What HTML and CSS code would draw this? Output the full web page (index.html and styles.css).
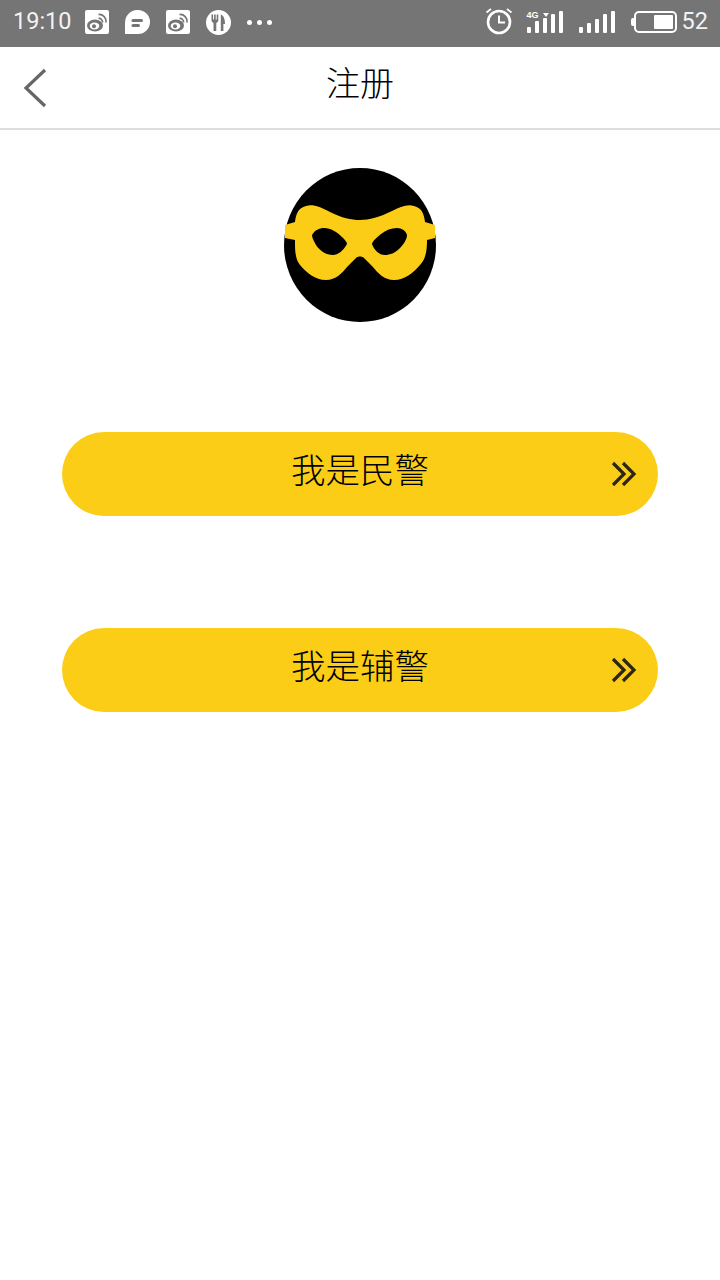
FILE: index.html
```html
<!DOCTYPE html>
<html lang="zh-CN">
<head>
<meta charset="utf-8">
<title>注册</title>
<link rel="stylesheet" href="styles.css">
</head>
<body>
<div class="status">
  <div class="status-left">
    <span class="time">19:10</span>
    <svg class="i-weibo" width="24" height="24" viewBox="0 0 24 24"><rect width="24" height="24" rx="2" fill="#fff"/><ellipse cx="10" cy="15.500" rx="8" ry="6" fill="#757575"/><ellipse cx="9.500" cy="16" rx="4.800" ry="3.400" fill="#fff"/><circle cx="9" cy="16.200" r="2" fill="#757575"/><path d="M13.500 4.500a7 7 0 0 1 7.500 8M13.500 8.500a3.500 3.500 0 0 1 4 4" fill="none" stroke="#757575" stroke-width="1.700"/></svg>
    <svg class="i-chat" width="25" height="24" viewBox="0 0 25 24"><path d="M13 0a12 12 0 1 1 0 24H0V13A12.500 13 0 0 1 13 0z" fill="#fff"/><rect x="6.500" y="9" width="11.500" height="3" rx="1.500" fill="#757575"/><rect x="6.500" y="14" width="8.500" height="3" rx="1.500" fill="#757575"/></svg>
    <svg class="i-weibo" width="24" height="24" viewBox="0 0 24 24"><rect width="24" height="24" rx="2" fill="#fff"/><ellipse cx="10" cy="15.500" rx="8" ry="6" fill="#757575"/><ellipse cx="9.500" cy="16" rx="4.800" ry="3.400" fill="#fff"/><circle cx="9" cy="16.200" r="2" fill="#757575"/><path d="M13.500 4.500a7 7 0 0 1 7.500 8M13.500 8.500a3.500 3.500 0 0 1 4 4" fill="none" stroke="#757575" stroke-width="1.700"/></svg>
    <svg class="i-food" width="25" height="25" viewBox="0 0 25 25"><circle cx="12.500" cy="12.500" r="12.500" fill="#fff"/><path d="M5.500 4.500v6a3 3 0 0 0 2 2.600V21h2.800v-7.900a3 3 0 0 0 2-2.600v-6h-1.600v5H9.700v-5H8.100v5H7.100v-5z" fill="#757575"/><path d="M14.800 21V4.500c2.800 1 4.200 4.200 4.200 9.500h-1.600v7z" fill="#757575"/></svg>
    <span class="dots"><i></i><i></i><i></i></span>
  </div>
  <div class="status-right">
    <svg class="i-alarm" width="28" height="28" viewBox="0 0 28 28"><circle cx="14" cy="15" r="11" fill="none" stroke="#fff" stroke-width="2.600"/><path d="M14 8.500V15.500H20" fill="none" stroke="#fff" stroke-width="2"/><path d="M1.500 5.500 6 2M26.500 5.500 22 2" stroke="#fff" stroke-width="1.800"/></svg>
    <div class="sig sig-4g">
      <span class="tag">4G</span><svg class="tri" width="6" height="4" viewBox="0 0 6 4"><path d="M0 0h6L3 4z" fill="#fff"/></svg>
      <span class="bars"><i class="b1"></i><i class="b2"></i><i class="b3"></i><i class="b4"></i><i class="b5"></i></span>
    </div>
    <div class="sig">
      <span class="bars"><i class="b1"></i><i class="b2"></i><i class="b3"></i><i class="b4"></i><i class="b5"></i></span>
    </div>
    <div class="battery"><span class="nub"></span><span class="shell"><span class="level"></span></span></div>
    <span class="pct">52</span>
  </div>
</div>

<header class="nav">
  <svg class="back" width="24" height="40" viewBox="0 0 24 40"><path d="M22 2 3 20l19 18" fill="none" stroke="#666" stroke-width="3.200"/></svg>
  <h1 class="title">注册</h1>
  <span class="nav-end"></span>
</header>

<main class="content">
  <svg class="avatar" width="152" height="154" viewBox="0 0 152 154">
    <ellipse cx="76" cy="77" rx="76" ry="77" fill="#000"/>
    <path fill="#fbcd16" fill-rule="evenodd" d="M1 57 11 54C12 46 14 40 22 38 29 36 36 39 46 44 58 50 67 52 76 52 85 52 96 49 108 43 116 39 123 36 130 38 138 40 140 46 141 54L151 57V70L143 72C143 82 142 91 136 97 129 105 121 112 110 112 100 112 94 105 88 98L80 90C78 88 74 88 72 90L64 98C58 105 52 112 42 112 31 112 23 105 16 97 11 91 11 82 11 72L1 70Z
    M28 67C31 62 35 60 40 60 47 60 53 64 58 69 61 72 63 74 63 76 59 83 54 87 49 87 42 87 36 83 32 77 30 73 28 70 28 67Z
    M88 76C88 74 92 70 97 66 102 62 107 60 113 60 118 60 122 63 123 67 123 71 120 76 116 80 111 85 106 87 101 87 95 87 90 82 88 76Z"/>
  </svg>
  <a class="role-btn first"><span class="role-label">我是民警</span><svg class="chev" width="26" height="26" viewBox="0 0 26 26"><path d="M2 2 13 13 2 24M12 2 23 13 12 24" fill="none" stroke="#2c2614" stroke-width="3.200"/></svg></a>
  <a class="role-btn"><span class="role-label">我是辅警</span><svg class="chev" width="26" height="26" viewBox="0 0 26 26"><path d="M2 2 13 13 2 24M12 2 23 13 12 24" fill="none" stroke="#2c2614" stroke-width="3.200"/></svg></a>
</main>
</body>
</html>
```
FILE: styles.css
```css
* { box-sizing: border-box; }
html, body { margin: 0; padding: 0; }
body {
  width: 720px;
  height: 1280px;
  background: #fff;
  overflow: hidden;
  font-family: "Noto Sans CJK SC", "Noto Sans", sans-serif;
  color: #111;
}
.status {
  height: 47px;
  background: #757575;
  display: flex;
  align-items: center;
  justify-content: space-between;
  padding: 0 12px 3px 13px;
  color: #fff;
}
.status-left, .status-right { display: flex; align-items: center; }
.time { font: 23.500px/1 Roboto, sans-serif; color: #f2f2f2; width: 72px; }
.i-chat, .i-food { margin-left: 16px; }
.i-chat + .i-weibo { margin-left: 16px; }
.dots { display: flex; gap: 5px; margin-left: 16px; }
.dots i { width: 5px; height: 5px; border-radius: 50%; background: #fff; }
.i-alarm { margin-right: 14px; margin-bottom: 2px; }
.sig { position: relative; width: 36px; height: 22px; margin-right: 16px; display: flex; align-items: flex-end; }
.bars { display: flex; align-items: flex-end; gap: 4px; }
.bars i { width: 4px; background: #fff; border-radius: 1px; display: block; }
.b1 { height: 6px; } .b2 { height: 10px; } .b3 { height: 14px; } .b4 { height: 19px; } .b5 { height: 22px; }
.tag { position: absolute; left: 0; top: 0; font: 700 9px/9px "Liberation Sans", sans-serif; background: #757575; padding-right: 1px; z-index: 1; }
.tri { position: absolute; left: 16px; top: 2px; z-index: 1; }
.sig-4g .b2 { height: 12px; }
.sig-4g .b3 { height: 15px; }
.battery { display: flex; align-items: center; }
.nub { width: 3px; height: 8px; background: #fff; border-radius: 2px 0 0 2px; }
.shell { width: 43px; height: 22px; border: 2px solid #fff; border-radius: 5px; padding: 2px; display: flex; justify-content: flex-end; }
.level { width: 19px; background: #fff; border-radius: 1px; }
.pct { font: 23.500px/1 Roboto, sans-serif; color: #f2f2f2; margin-left: 5px; }

.nav {
  height: 83px;
  border-bottom: 2px solid #ddd;
  display: grid;
  grid-template-columns: 1fr auto 1fr;
  align-items: center;
  padding: 0 23px;
}
.back { display: block; }
.title { margin: 0; font-size: 34px; font-weight: 300; line-height: 1; color: #000; position: relative; top: -6px; }

.content { display: flex; flex-direction: column; align-items: center; padding-top: 38px; }
.avatar { display: block; margin-bottom: 110px; }
.role-btn {
  width: 596px;
  height: 84px;
  border-radius: 42px;
  background: #fbcd16;
  display: flex;
  align-items: center;
  justify-content: center;
  position: relative;
  margin-bottom: 112px;
}
.role-label { font-size: 34.500px; font-weight: 300; line-height: 1; color: #000; position: relative; top: -6px; }
.chev { position: absolute; right: 21px; top: 29px; }
```
